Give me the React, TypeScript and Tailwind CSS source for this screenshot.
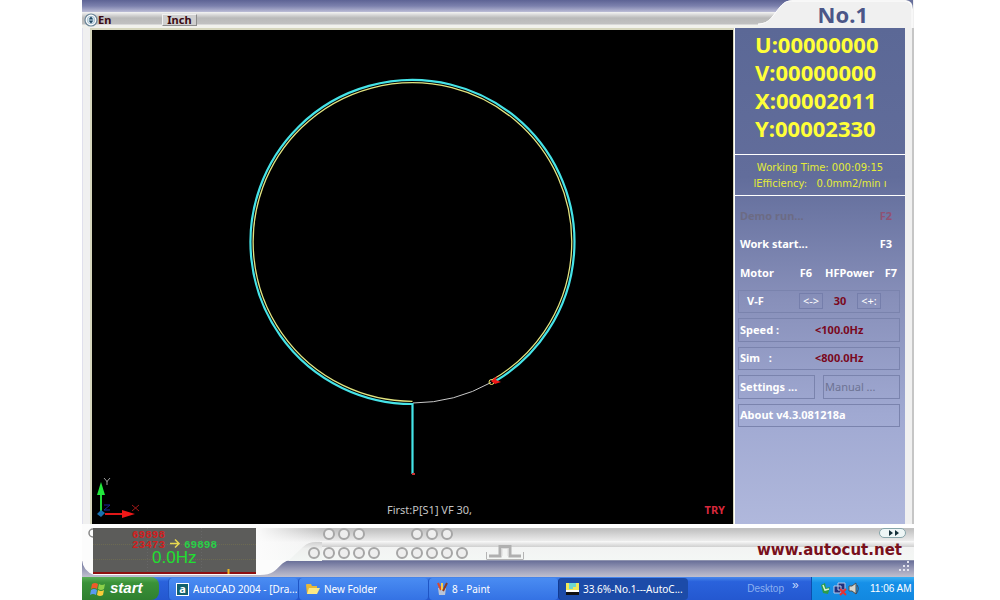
import type { ReactNode } from "react";

const axes = [
  ["U", "00000000"],
  ["V", "00000000"],
  ["X", "00002011"],
  ["Y", "00002330"],
];

const box = "flex items-center border border-[#7a83ad] px-px text-left";

function Leds({ count }: { count: number }) {
  return (
    <div className="flex w-[72px] justify-center gap-[3px]">
      {Array.from({ length: count }, (_, i) => (
        <span
          key={i}
          className="size-3 rounded-full border-2 border-[#a6a6a6] bg-[#eeeeee]"
        />
      ))}
    </div>
  );
}

function TitleBar() {
  return (
    <header className="relative h-7 shrink-0 bg-[#f1f1ec]">
      <div className="h-3 bg-linear-to-b from-[#5d6394] via-[#7c81ad] to-[#bcbdd6]" />
      <div className="flex h-[13px] items-center border-b border-[#d8d8d8] bg-linear-to-b from-[#f4f4f4] via-[#b9b9b9] to-[#c0c0c0]">
        <button className="flex items-center text-[11px] leading-3 font-bold text-[#3a0a12]">
          <svg viewBox="0 0 14 14" className="mt-1 ml-[2px] size-[14px]">
            <circle cx="7" cy="7" r="6" fill="#fff" stroke="#6b8699" strokeWidth="1.2" />
            <circle cx="7" cy="7" r="3.8" fill="#d8ecf5" stroke="#9ab4c4" strokeWidth="0.8" />
            <path d="M7 3.4 9.4 6.4H4.6zM7 10.6 4.6 7.6h4.8z" fill="#1d4460" />
          </svg>
          <span className="mt-1">En</span>
        </button>
        <button className="mt-1 ml-[51px] border border-[#f0f0f0] border-r-[#8c8c8c] border-b-[#8c8c8c] bg-[#cfcfcf] px-1 text-[11px] leading-[10px] font-bold text-[#3a0a12]">
          Inch
        </button>
      </div>
      <svg viewBox="0 0 156 28" className="absolute top-0 right-0 h-7 w-[156px]">
        <path d="M0 24C12 24 15 15 22 7 27 1 30 0 36 0H156V28H0Z" fill="#f0f0f0" />
        <path d="M0 24C12 24 15 15 22 7 27 1 30 1 36 1H146Q154 1 154 9V28" fill="none" stroke="#fff" />
        <path d="M36 0H148Q155 1 155 9V0Z" fill="#68709c" />
      </svg>
      <h1 className="absolute top-0 right-[46px] text-[22px] leading-7 font-bold text-[#4b5688]">
        No.1
      </h1>
    </header>
  );
}

function Drawing() {
  return (
    <div className="relative min-w-0 flex-1 border-t-2 border-r border-l-2 border-[#d6d6bd] bg-black">
      <svg viewBox="92 30 641 494" className="h-full w-full">
        <path d="M413 403A161 161 0 0 0 491 382.500" fill="none" stroke="#c8c8c8" />
        <path
          d="M412.500 474V404A162 162 0 1 1 496 380.800"
          fill="none"
          stroke="#45e4e8"
          strokeWidth="2.200"
        />
        <path d="M412.500 401.300A159.300 159.300 0 1 1 491.500 380.300" fill="none" stroke="#e2e480" strokeWidth="1.300" />
        <path d="M412 473h3v2h-3z" fill="#d03030" />
        <circle cx="491.500" cy="382" r="2.500" fill="none" stroke="#f2eb6b" />
        <path d="M491 381 497 376 496 380 501 382 495 384Z" fill="#f01818" />
        <path d="M101 512V490" stroke="#20d838" strokeWidth="2" />
        <path d="M101 482 105 495H97Z" fill="#22e83c" />
        <path d="M105 514H123" stroke="#e01818" strokeWidth="2" />
        <path d="M122 510 135 514 122 518Z" fill="#f01818" />
        <path d="M97 514 101 510 105 513 101 517Z" fill="#1870b0" />
        <path d="M104 505h6l-6 5h6" fill="none" stroke="#1c2499" />
        <path d="M104 478 107 481.500 110 478M107 481V485" fill="none" stroke="#a0a0a0" />
        <path d="M132 505 139 511M139 505 132 511" stroke="#a01818" />
      </svg>
      <p className="absolute right-0 bottom-2 left-[295px] text-[11px] leading-3 text-[#c4c4c4]">
        First:P[S1] VF 30,
      </p>
      <p className="absolute right-2 bottom-2 text-[11px] leading-3 font-bold text-[#d8283c]">TRY</p>
    </div>
  );
}

function SidePanel() {
  return (
    <aside className="w-[171px] shrink-0 border-l border-white bg-[linear-gradient(#5b6896,#626d9b_30%,#8890ba_55%,#a0a9d2_78%,#b0b8dc)] text-[11px] font-bold text-white">
      <dl className="h-[127px] border-b border-white pt-[2px] pl-5 text-[22px] leading-7 text-[#ffff38]">
        {axes.map(([axis, value]) => (
          <div key={axis} className="flex">
            <dt>{axis}:</dt>
            <dd>{value}</dd>
          </div>
        ))}
      </dl>
      <div className="h-[41px] border-b border-white pt-[5px] text-center font-[DejaVu_Sans] text-[10px] leading-4 font-normal text-[#e4ec38]">
        <p>Working Time: 000:09:15</p>
        <p className="whitespace-pre">{"ⅼEfficiency:   0.0mm2/min ı"}</p>
      </div>
      <div className="grid h-[231px] grid-rows-8 gap-[5px] pt-2 pr-[5px] pl-[3px]">
        <button disabled className="flex items-center justify-between pr-2 pl-[2px] text-[#6c6b84]">
          <span>Demo run...</span>
          <span className="text-[#8f5274]">F2</span>
        </button>
        <button className="flex items-center justify-between pr-2 pl-[2px]">
          <span>Work start...</span>
          <span>F3</span>
        </button>
        <div className="flex justify-between pr-[3px] pl-[2px]">
          <button className="flex w-[72px] items-center justify-between">
            <span>Motor</span>
            <span>F6</span>
          </button>
          <button className="flex w-[72px] items-center justify-between">
            <span>HFPower</span>
            <span>F7</span>
          </button>
        </div>
        <div className={box}>
          <span className="w-[59px] pl-[7px]">V-F</span>
          <button className="h-4 w-6 border border-[#757eab] leading-3 font-normal">&lt;-&gt;</button>
          <output className="w-[34px] text-center text-[#7a0820]">30</output>
          <button className="h-4 w-6 border border-[#757eab] leading-3 font-normal">&lt;+:</button>
        </div>
        <button className={box}>
          <span className="w-[75px]">Speed :</span>
          <span className="text-[#7a0820]">&lt;100.0Hz</span>
        </button>
        <button className={box}>
          <span className="w-[75px] whitespace-pre">Sim   :</span>
          <span className="text-[#7a0820]">&lt;800.0Hz</span>
        </button>
        <div className="grid grid-cols-2 gap-2">
          <button className={box}>Settings ...</button>
          <button disabled className="flex items-center border border-[#7a83ad] px-px font-normal text-[#6d7393]">
            Manual ...
          </button>
        </div>
        <button className={box}>About v4.3.081218a</button>
      </div>
    </aside>
  );
}

function Scope() {
  return (
    <div className="relative ml-[11px] h-[46px] w-[163px] bg-[#5c5c5a]">
      <svg viewBox="0 0 163 46" className="absolute inset-0 h-full w-full">
        <path d="M0 16.500H163M0 31.500H163" stroke="#6c6a52" strokeDasharray="1 1" />
        <path d="M54.500 0V46M108.500 0V46" stroke="#676767" strokeDasharray="1 2" />
        <path d="M0 45H163" stroke="#8f1010" strokeWidth="2" />
        <path d="M135.500 41V46" stroke="#f0b820" strokeWidth="2" />
        <path d="M77 15.500H85M82 11.500 86 15.500 82 19.500" fill="none" stroke="#e8d850" strokeWidth="1.500" />
      </svg>
      <div className="relative flex pl-[39px] font-[Liberation_Mono] text-[11px] leading-[10px] font-bold">
        <p className="w-[52px] pt-[2px] text-[#d02020]">
          69898
          <br />
          23473
        </p>
        <p className="pt-3 text-[#28d048]">69898</p>
      </div>
      <p className="absolute bottom-2 left-[59px] font-[Liberation_Sans] text-[17px] leading-4 text-[#20e030]">
        0.0Hz
      </p>
    </div>
  );
}

function StatusBar() {
  return (
    <footer className="relative flex h-[53px] shrink-0 bg-linear-to-b from-[#6a7099] from-70% via-[#9a9cb8] via-85% to-[#c0c0ce] pt-1">
      <div className="absolute inset-x-0 top-0 h-[37px] border-t-4 border-b border-t-white border-b-[#8d92ae] bg-linear-to-b from-[#c2c2c2] from-5% via-[#f2f2f2] via-45% to-[#f4f7f5]" />
      <div className="absolute right-0 left-[238px] top-[17px] h-[6px] bg-linear-to-b from-[#fafafa] to-[#cfcfcf]" />
      <svg viewBox="0 0 240 53" className="absolute top-0 left-0 h-full w-[240px]">
        <defs>
          <linearGradient id="fade">
            <stop offset="0.72" stopColor="#fcfcfc" />
            <stop offset="1" stopColor="#fcfcfc" stopOpacity="0" />
          </linearGradient>
          <linearGradient id="slope" x2="0" y2="1">
            <stop offset="0" stopColor="#d0d0d0" />
            <stop offset="0.350" stopColor="#eeefee" />
            <stop offset="1" stopColor="#f2f6f4" />
          </linearGradient>
        </defs>
        <path d="M0 0H240V37H0Z" fill="url(#fade)" />
        <path d="M0 36H207C200 38 197 44 191 48 188 50 184 51 178 51H12Q1 47 0 36Z" fill="#fcfcfc" />
        <path d="M206 37 221 23Q226 18 234 18H240V37Z" fill="url(#slope)" />
        <path d="M11 5a4 4 0 0 0 0 8" fill="none" stroke="#888" strokeWidth="1.500" />
      </svg>
      <div className="relative flex min-w-0 flex-1">
        <Scope />
        <div className="ml-[52px] flex flex-col gap-[7px]">
          <div className="flex gap-4">
            <Leds count={3} />
            <Leds count={3} />
          </div>
          <div className="flex gap-4">
            <Leds count={5} />
            <Leds count={5} />
          </div>
        </div>
        <svg viewBox="0 0 40 18" className="mt-[15px] ml-[17px] h-[18px] w-10">
          <path d="M1.500 9V16.500M38.500 9V16.500M2 16.500H38" stroke="#b4b4b4" fill="none" />
          <path d="M4 13H15V3.500H25V13H36" stroke="#b0b0b0" strokeWidth="3" fill="none" />
          <path d="M17 13V5.500H23V13" stroke="#dcdcdc" fill="none" />
        </svg>
        <div className="ml-auto flex flex-col items-end pr-2">
          <button aria-label="Next" className="flex h-[10px] w-[27px] items-center justify-center rounded-full border border-[#87a5aa] bg-[#eef6f6]">
            <svg viewBox="0 0 10 6" className="ml-[2px] h-[6px] w-[10px]">
              <path d="M0 0 4 3 0 6ZM6 0 10 3 6 6Z" fill="#15303a" />
            </svg>
          </button>
          <a href="#" className="mr-1 font-[DejaVu_Sans] text-[15px] leading-[24px] font-bold text-[#78101c]">
            www.autocut.net
          </a>
        </div>
      </div>
      <svg viewBox="0 0 12 12" className="absolute right-1 bottom-1 size-3">
        <path d="M9 0h2v2H9zM5 4h2v2H5zM9 4h2v2H9zM1 8h2v2H1zM5 8h2v2H5zM9 8h2v2H9z" fill="#e4e4ee" />
      </svg>
    </footer>
  );
}

function Task({ icon, label, active }: { icon: ReactNode; label: string; active?: boolean }) {
  return (
    <button
      className={`flex h-[22px] w-[130px] min-w-0 items-center gap-1 rounded-sm border-l pl-[7px] text-[10px] text-white ${
        active ? "border-[#123a90] bg-[#1c4ba8]" : "border-[#1f55c4] bg-linear-to-b from-[#4a8cf2] to-[#3472e4]"
      }`}
    >
      {icon}
      <span className="truncate">{label}</span>
    </button>
  );
}

function Taskbar() {
  return (
    <nav className="flex h-[23px] shrink-0 items-end bg-linear-to-b from-[#4a88ec] via-[#2a62dc] via-20% to-[#2458d0]">
      <button className="flex h-[23px] w-[77px] items-center gap-1 rounded-r-lg bg-linear-to-b from-[#5aae58] via-[#3a9238] via-25% to-[#2f8030] pl-2 font-[Liberation_Sans] text-[15px] font-bold text-white italic">
        <svg viewBox="0 0 16 14" className="h-[14px] w-4">
          <path d="M2 2Q5 0 8 2L7 7Q4 5 1 7Z" fill="#ee5a2a" />
          <path d="M9 2Q12 4 15 2L14 7Q11 9 8 7Z" fill="#8cd04a" />
          <path d="M1 8Q4 6 7 8L6 13Q3 11 0 13Z" fill="#5a9af0" />
          <path d="M8 8Q11 10 14 8L13 13Q10 15 7 13Z" fill="#f8cc3a" />
        </svg>
        start
      </button>
      <div className="ml-[9px] flex min-w-0">
        <Task
          label="AutoCAD 2004 - [Dra..."
          icon={
            <span className="flex size-[13px] shrink-0 items-center justify-center border border-white bg-[#12606c] text-[11px] leading-3 font-bold">
              a
            </span>
          }
        />
        <Task
          label="New Folder"
          icon={
            <svg viewBox="0 0 14 12" className="h-3 w-[14px] shrink-0">
              <path d="M0 2Q0 1 1 1H5L6 3H11V11H1Z" fill="#e8b838" />
              <path d="M3 5H14L11 11H1Z" fill="#fbe884" />
            </svg>
          }
        />
        <Task
          label="8 - Paint"
          icon={
            <svg viewBox="0 0 12 14" className="h-[14px] w-3 shrink-0">
              <path d="M2 6H10L9 13H3Z" fill="#b8c4d8" />
              <path d="M2 1 5 8" stroke="#e04828" strokeWidth="2" />
              <path d="M6 1V8" stroke="#f4d050" strokeWidth="2" />
              <path d="M11 1 7 9" stroke="#8c3a20" strokeWidth="2" />
            </svg>
          }
        />
        <Task
          active
          label="33.6%-No.1---AutoC..."
          icon={
            <svg viewBox="0 0 13 12" className="h-3 w-[13px] shrink-0">
              <path d="M0 0H13V8H0Z" fill="#f0e858" />
              <path d="M3 0H10V4H7V6H3Z" fill="#70d8d0" />
              <path d="M0 7H13V9H0Z" fill="#fff" />
              <path d="M0 9H13V12H0Z" fill="#101010" />
            </svg>
          }
        />
      </div>
      <div className="ml-auto flex h-[23px] items-center font-[Liberation_Sans] text-[10px] text-[#8cb0f0]">
        Desktop
        <span className="mb-2 ml-2 w-[19px] text-[12px] leading-3 text-[#c8dcfc]">»</span>
      </div>
      <div className="flex h-[23px] w-[103px] shrink-0 items-center gap-[10px] border-l border-[#0d4fae] bg-linear-to-b from-[#38b0f4] via-[#1690e8] via-25% to-[#1288e0] pl-2 font-[Liberation_Sans] text-[10px] whitespace-nowrap text-white">
        <svg viewBox="0 0 40 14" className="h-[14px] w-10">
          <path d="M1 3 5 1 6 6 10 5 8 12 3 11Z" fill="#2c9c48" />
          <path d="M3 3 5 8 9 7" fill="none" stroke="#d8f0d0" strokeWidth="1.500" />
          <path d="M18 1H25V8H18ZM14 4H21V11H14Z" fill="#20307c" stroke="#b8c8e8" />
          <path d="M20 7 26 13M26 7 20 13" stroke="#e83030" strokeWidth="2" />
          <path d="M29 4H32L36 1V12L32 9H29Z" fill="#d8d8d0" stroke="#505050" />
          <path d="M37 3Q40 7 36 12" fill="none" stroke="#404858" />
        </svg>
        <time>11:06 AM</time>
      </div>
    </nav>
  );
}

export default function App() {
  return (
    <div className="min-h-screen bg-white pr-[86px] pl-[82px] font-[Noto_Sans,sans-serif]">
      <div className="flex h-screen flex-col">
        <TitleBar />
        <main className="flex min-h-0 flex-1 border-r-2 border-l border-r-[#c6c6c6] border-l-[#e0e0ec] bg-[#f0f0f0] pr-[7px] pl-[7px]">
          <Drawing />
          <SidePanel />
        </main>
        <StatusBar />
        <Taskbar />
      </div>
    </div>
  );
}
